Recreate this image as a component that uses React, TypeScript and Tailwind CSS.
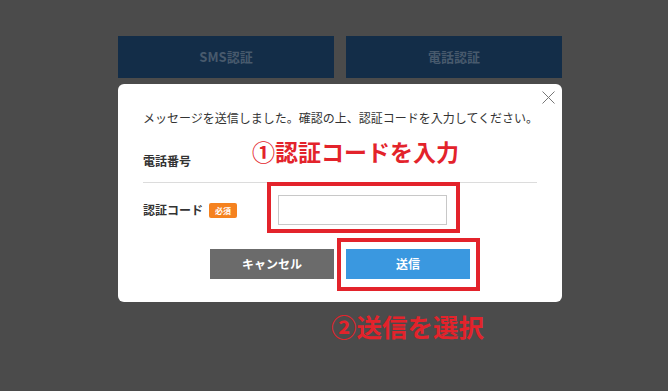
import React from 'react';

const jp = { fontFamily: '"Noto Sans CJK JP", "Noto Sans", sans-serif' };

export default function App() {
  return (
    <div className="relative w-[668px] h-[391px] bg-[#4b4b4b] overflow-hidden" style={jp}>
      <div className="flex flex-col items-center pt-[36px] pl-[12px]">
        {/* auth method tabs */}
        <div className="flex gap-[12px]">
          <button className="w-[216px] h-[42px] bg-[#132d48] text-[#485a6d] text-[13px] font-bold">SMS認証</button>
          <button className="w-[216px] h-[42px] bg-[#132d48] text-[#485a6d] text-[13px] font-bold">電話認証</button>
        </div>

        {/* dialog */}
        <div className="relative mt-[6px] w-[444px] bg-white rounded-[6px] px-[25px] pt-[25px] pb-[23px]">
          <button className="absolute right-[6px] top-[5px] w-[16px] h-[16px] flex items-center justify-center">
            <svg width="13" height="13" viewBox="0 0 13 13" fill="none" stroke="#777" strokeWidth="1">
              <path d="M0.5 0.5 L12.5 12.5 M12.5 0.5 L0.5 12.5" />
            </svg>
          </button>

          <p className="text-[12px] leading-[18px] text-[#333] whitespace-nowrap">
            メッセージを送信しました。確認の上、認証コードを入力してください。
          </p>

          <div className="flex items-center pt-[25px] pb-[12px] border-b border-[#dcdcdc]">
            <span className="text-[12px] leading-[18px] font-bold text-[#333]">電話番号</span>
          </div>

          <div className="flex items-center pt-[12px]">
            <div className="w-[135px] flex items-center gap-[6px]">
              <span className="text-[12px] leading-[18px] font-bold text-[#333]">認証コード</span>
              <span className="bg-[#f5821f] text-white text-[8px] leading-[15px] px-[6px] rounded-[2px] font-bold">必須</span>
            </div>
            <input className="w-[169px] h-[30px] border border-[#c8c8c8] outline-none px-2 text-[12px]" />
          </div>

          <div className="flex justify-center gap-[12px] mt-[24px]">
            <button className="w-[124px] h-[30px] bg-[#6b6b6b] text-white text-[12px] font-bold">キャンセル</button>
            <button className="w-[124px] h-[30px] bg-[#3a98e0] text-white text-[12px] font-bold">送信</button>
          </div>
        </div>
      </div>

      {/* annotations */}
      <div className="absolute left-[252px] top-[135px] text-[23px] leading-[32px] font-bold text-[#e3232b] whitespace-nowrap">
        ①認証コードを入力
      </div>
      <div className="absolute left-[267px] top-[182px] w-[193px] h-[51px] border-[4px] border-[#e3232b]" />
      <div className="absolute left-[337px] top-[238px] w-[143px] h-[53px] border-[4px] border-[#e3232b]" />
      <div className="absolute left-[331px] top-[310px] text-[25.5px] leading-[32px] font-bold text-[#e3232b] whitespace-nowrap">
        ②送信を選択
      </div>
    </div>
  );
}
